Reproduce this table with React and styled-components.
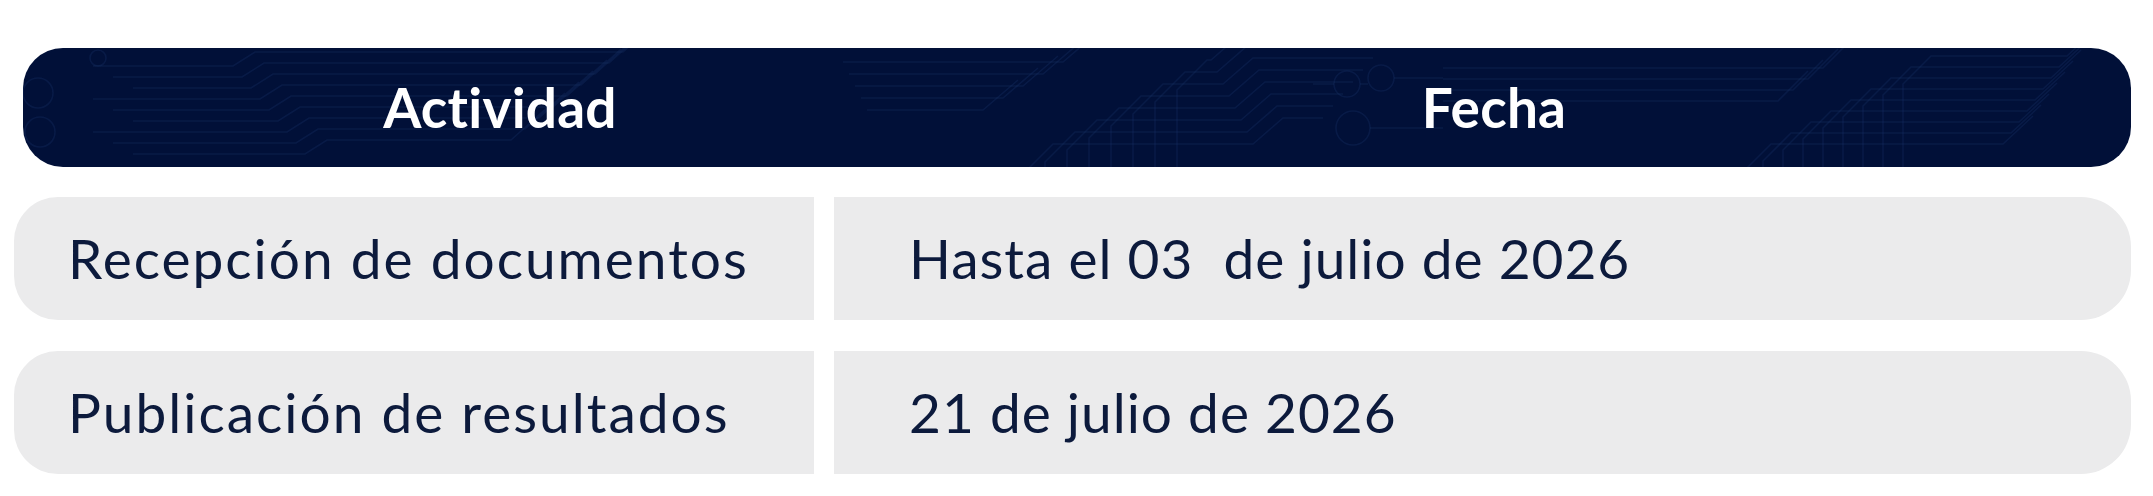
import React from "react";
import styled, { createGlobalStyle } from "styled-components";

const GlobalStyle = createGlobalStyle`
  html, body { margin: 0; padding: 0; background: #ffffff; }
  body { font-family: "Lato", "Noto Sans", sans-serif; }
`;

const Page = styled.div`
  width: 2153px;
  height: 496px;
  box-sizing: border-box;
  padding: 48px 22px 0 14px;
  display: flex;
  flex-direction: column;
`;

const Header = styled.div`
  position: relative;
  overflow: hidden;
  margin-left: 9px;
  height: 119px;
  border-radius: 40px;
  background: #011038;
  display: grid;
  grid-template-columns: 954px 1034px;
  align-items: center;
  justify-items: center;
`;

const HeaderLabel = styled.span`
  position: relative;
  z-index: 1;
  color: #ffffff;
  font-family: "Lato", sans-serif;
  font-weight: 700;
  font-size: 55px;
  line-height: 1;
  letter-spacing: 0.2px;
`;

const Circuit = styled.svg`
  position: absolute;
  inset: 0;
  width: 100%;
  height: 100%;
  pointer-events: none;
`;

const Rows = styled.div`
  display: flex;
  flex-direction: column;
  gap: 31px;
  margin-top: 30px;
`;

const Row = styled.div`
  display: grid;
  grid-template-columns: 800px 1297px;
  gap: 20px;
  height: 123px;
`;

const Cell = styled.div`
  background: #ebebec;
  display: flex;
  align-items: center;
  padding-left: ${(p) => (p.$first ? "54px" : "75px")};
  border-radius: ${(p) => (p.$first ? "44px 0 0 44px" : "0 50px 50px 0")};
`;

const CellText = styled.span`
  color: #0c1a3c;
  font-family: "Lato", sans-serif;
  font-weight: 400;
  font-size: 55px;
  line-height: 1;
  white-space: pre;
  letter-spacing: ${(p) => p.$spacing}px;
`;

function buildCircuit() {
  const paths = [];
  for (let i = 0; i < 9; i++) {
    const y = 18 + i * 11;
    const x0 = 70 + (i % 3) * 20;
    const b1 = 210 + i * 9;
    const b2 = 600 - i * 14;
    paths.push(`M${x0} ${y} H${b1} L${b1 + 22} ${y - 14} H${b2} L${b2 + 40} ${y - 50}`);
  }
  for (let i = 0; i < 8; i++) {
    const y = 118 - i * 12;
    const x = 1000 + i * 22;
    const bx = 1230 - i * 6;
    paths.push(`M${x} 119 V${y + 8} L${x + 30} ${y - 22} H${bx} L${bx + 30} ${y - 48} H${1300 + i * 10}`);
  }
  for (let i = 0; i < 5; i++) {
    const y = 14 + i * 12;
    paths.push(`M${820 + i * 6} ${y} H${1040 - i * 20} L${1075 - i * 20} ${y - 30}`);
  }
  for (let i = 0; i < 9; i++) {
    const y = 118 - i * 11;
    const x = 1720 + i * 20;
    const bx = 1980 + i * 8;
    paths.push(`M${x} 119 V${y + 6} L${x + 28} ${y - 22} H${bx} L${bx + 30} ${y - 50}`);
  }
  for (let i = 0; i < 4; i++) {
    const y = 20 + i * 11;
    paths.push(`M1420 ${y} H${1800 - i * 15} L${1830 - i * 15} ${y - 30}`);
  }
  return paths;
}

const circuitPaths = buildCircuit();

function CircuitPattern() {
  return (
    <Circuit viewBox="0 0 2108 119" preserveAspectRatio="none" aria-hidden="true">
      <g fill="none" stroke="#1a3268" strokeOpacity="0.32" strokeWidth="1.6">
        {circuitPaths.map((d, i) => (
          <path key={i} d={d} />
        ))}
        <circle cx="75" cy="10" r="8" />
        <circle cx="15" cy="45" r="15" />
        <circle cx="17" cy="84" r="15" />
        <circle cx="1324" cy="36" r="13" />
        <circle cx="1358" cy="30" r="13" />
        <circle cx="1330" cy="80" r="17" />
        <path d="M1337 36 H1345 M1371 30 H1420 M1347 80 H1420 M1290 36 H1311" />
      </g>
    </Circuit>
  );
}

const data = [
  { actividad: "Recepción de documentos", fecha: "Hasta el 03  de julio de 2026" },
  { actividad: "Publicación de resultados", fecha: "21 de julio de 2026" },
];

export default function App() {
  return (
    <>
      <GlobalStyle />
      <Page>
        <Header>
          <CircuitPattern />
          <HeaderLabel>Actividad</HeaderLabel>
          <HeaderLabel>Fecha</HeaderLabel>
        </Header>
        <Rows>
          {data.map((r) => (
            <Row key={r.actividad}>
              <Cell $first>
                <CellText $spacing={2}>{r.actividad}</CellText>
              </Cell>
              <Cell>
                <CellText $spacing={1}>{r.fecha}</CellText>
              </Cell>
            </Row>
          ))}
        </Rows>
      </Page>
    </>
  );
}
